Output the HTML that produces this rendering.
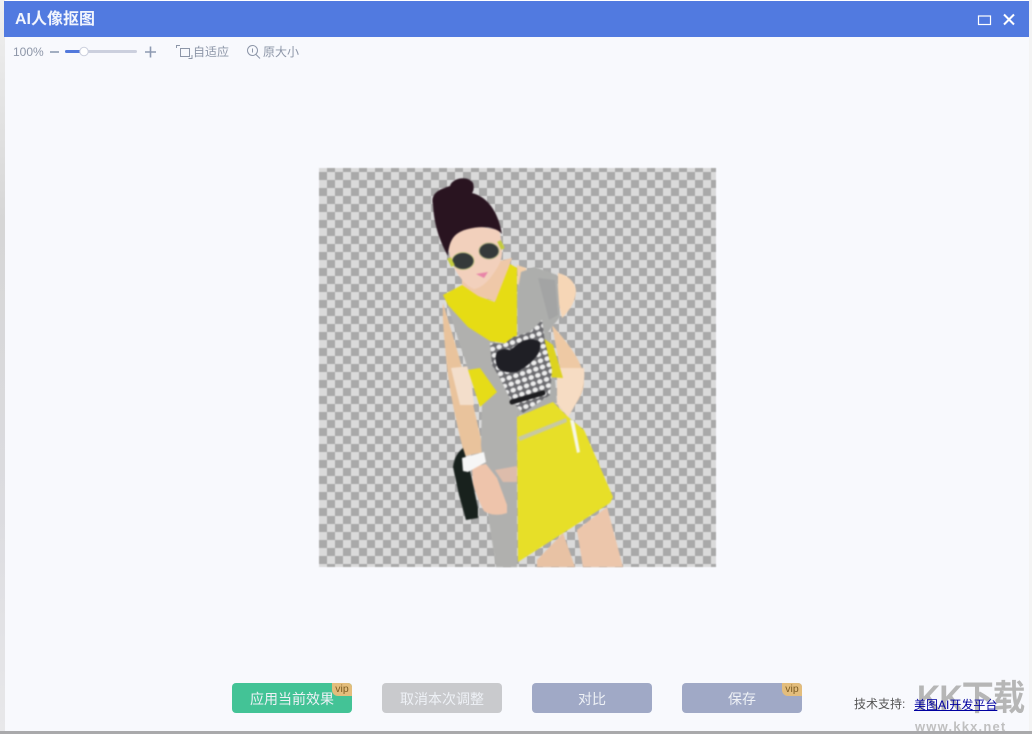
<!DOCTYPE html>
<html lang="zh"><head><meta charset="utf-8"><title>AI人像抠图</title>
<style>
html,body{margin:0;padding:0;width:1032px;height:734px;overflow:hidden;background:#fff}
*{box-sizing:border-box}
body{font-family:"Liberation Sans","Noto Sans CJK SC",sans-serif;position:relative}
.abs{position:absolute}
#edgeL{left:0;top:0;width:5px;height:734px;background:linear-gradient(#f0f0f0,#d6d6d6 30%,#dcdce0 70%,#e8e8ea)}
#edgeB{left:0;top:731px;width:1032px;height:3px;background:#a9a9ab}
#edgeR{left:1029px;top:0;width:3px;height:734px;background:#f4f4f4}
#win{left:5px;top:1px;width:1024px;height:730px;background:#f8f9fd}
#title{left:4px;top:1px;width:1025px;height:36px;background:#517ae0}
#ttext{left:15px;top:10px;font-size:16px;font-weight:bold;color:#f2f5fd;line-height:20px}
.tb{color:#8d96a8;font-size:12px;line-height:16px;white-space:nowrap}
#check{left:319px;top:168px;width:397px;height:399px;background:repeating-conic-gradient(#a9a9a9 0 25%,#dadada 0 50%) 0 -4px/16px 16px;filter:blur(.4px)}
.btn{position:absolute;top:683px;width:120px;height:30px;border-radius:4px;color:#eef1f6;font-size:14px;line-height:32px;text-align:center}
.vip{position:absolute;right:0;top:0;width:20px;height:13px;background:#e3bd7c;border-radius:0 4px 0 6px;color:#7c5c24;font-size:10.5px;line-height:12px;text-align:center}
</style></head><body>
<div class="abs" id="edgeL"></div><div class="abs" id="edgeR"></div>
<div class="abs" id="win"></div><div class="abs" id="edgeB"></div>
<div class="abs" id="title"></div>
<div class="abs" id="ttext">AI人像抠图</div>
<svg class="abs" style="left:970px;top:8px" width="50" height="24" fill="none" stroke="#fff">
<rect x="8.500" y="8" width="12" height="8.500" stroke-width="1.200"/>
<path d="M34 6.500L44 16.500M44 6.500L34 16.500" stroke-width="2"/>
</svg>
<div class="abs tb" style="left:13px;top:44px">100%</div>
<svg class="abs" style="left:45px;top:40px" width="270" height="24" fill="none">
<path d="M5 12H14" stroke="#8d9ab2" stroke-width="1.600"/>
<rect x="20" y="10" width="72" height="3" rx="1.500" fill="#ccd0de"/>
<rect x="20" y="10" width="19" height="3" rx="1.500" fill="#5279dc"/>
<circle cx="39" cy="11.500" r="4.200" fill="#fff" stroke="#ccd0de"/>
<path d="M100 12H111M105.500 6.500V17.500" stroke="#8d9ab2" stroke-width="1.600"/>
<g stroke="#8d96a8" stroke-width="1">
<rect x="135.500" y="8.500" width="9" height="8"/>
<path d="M131.500 8V5.500H135M147 15V18.500H143.500"/>
<circle cx="207.500" cy="10.500" r="5"/><path d="M211 14.500L215 18.500M207.500 8.500V12.500"/>
</g></svg>
<div class="abs tb" style="left:193px;top:44px">自适应</div>
<div class="abs tb" style="left:263px;top:44px">原大小</div>
<div class="abs" id="check"></div>
<svg class="abs" style="left:0;top:0;filter:blur(.8px)" width="1032" height="734">
<defs>
<pattern id="peb" width="7" height="6.500" patternUnits="userSpaceOnUse" patternTransform="rotate(-18)">
<rect width="7" height="6.500" fill="#6a6a6e"/>
<ellipse cx="3.500" cy="3.200" rx="2.800" ry="2.400" fill="#eeeeee"/>
</pattern>
</defs>
<!-- left arm -->
<path d="M443 303C448 320 456 345 462 368L472 400L484 452L465 456C458 430 450 395 447 367C445 345 442 320 443 303Z" fill="#e9c39c"/>
<path d="M451 368L470 366L474 405L460 405Z" fill="#f3decb"/>
<!-- right arm -->
<path d="M552 325C565 340 578 355 583 372C586 385 582 395 575 405L568 417L556 403C560 390 563 380 560 368Z" fill="#eec9a4"/>
<path d="M557 368L584 368C586 385 580 398 568 417L557 403Z" fill="#f6dcc3"/>
<!-- shoulder -->
<path d="M558 273C568 275 576 283 576 292C575 303 568 312 562 318L558 300Z" fill="#f6d6b6"/>
<path d="M517 265L526 268L528 276L518 285Z" fill="#f3cfa9"/>
<!-- neck/chest -->
<path d="M462 270L512 258L497 302L478 296L462 286Z" fill="#efc8a8"/>
<!-- gray dress lower-left -->
<path d="M447 304L470 328L492 342L517 345L517 567L496 567L488 515L481 445L482 405L470 375L460 345Z" fill="#b0b0ae"/>
<!-- gray upper right -->
<path d="M517 295L521 272L535 267L557 275L560 317L548 332L540 322L518 345Z" fill="#adaeac"/>
<path d="M538 278L555 280L558 315L549 320Z" fill="#a3a4a4"/>
<path d="M518 345L545 320L552 345L557 403L530 412L517 416Z" fill="#adaeac"/>
<!-- yellow top -->
<path d="M443 295L462 285L478 296L495 302L510 264L517 268L517 345L490 341L468 327L448 305Z" fill="#e6dc14"/>
<path d="M468 370L480 368L497 392L480 407Z" fill="#e6dc18"/>
<path d="M543 338L553 345L563 378L547 377Z" fill="#ddd31e"/>
<!-- owl -->
<path d="M490 343L504 344L513 337L530 332L542 320L545 342L552 370L550 395L523 413L517 407L508 395L500 378L492 365Z" fill="url(#peb)"/>
<path d="M497 352C502 348 507 349 510 350L517 345C522 340 532 337 540 342C541 350 538 355 535 358C528 366 522 369 517 372C508 373 502 372 498 368C495 362 495 356 497 352Z" fill="#1f1f25"/>
<path d="M512 402L543 393" stroke="#1d1d20" stroke-width="5" stroke-linecap="round"/>
<!-- yellow skirt -->
<path d="M517 417L553 402L567 416L584 430L613 497L610 503L518 562Z" fill="#e7df28"/>
<path d="M518 437L566 418L567 422L520 441Z" fill="#c8c9a0"/>
<path d="M570 420L574 420L580 452L577 453Z" fill="#f6f6e6"/>
<!-- legs -->
<path d="M537 560L563 533L575 567L537 567Z" fill="#e8c2a4"/>
<path d="M577 530L607 507L623 567L583 567Z" fill="#ecc6ab"/>
<!-- bag -->
<path d="M453 467C454 458 458 452 463 448L470 470L478 508L478 518L466 520L459 495Z" fill="#18211d"/>
<!-- hand -->
<path d="M472 467L486 464L497 478L507 505L507 513C498 516 490 515 484 511C478 500 475 490 473 484Z" fill="#eec4ab"/>
<path d="M495 470L517 466L517 482L503 482Z" fill="#ddbcab"/>
<!-- watch -->
<path d="M462 458L484 452L486 462L468 472L463 471Z" fill="#f6f6f6"/>
<!-- face -->
<path d="M447 234L470 225L499 230C503 245 504 258 497 268C490 280 482 288 474 289C464 285 455 272 450 258Z" fill="#f2d0bc"/>
<!-- hair -->
<path d="M433 205C430 193 440 189 450 186C452 178 468 175 473 183C475 190 472 193 472 193C488 197 498 212 502 234C495 226 480 226 468 229C456 232 449 238 448 256C438 238 434 222 433 205Z" fill="#291420"/>
<ellipse cx="463" cy="261" rx="11" ry="8.500" fill="#353a3a" stroke="#c8c888"/>
<ellipse cx="489" cy="251" rx="10" ry="8" fill="#353a3a" stroke="#b8b888"/>
<path d="M449 258L453 266M499 241L503 249" stroke="#c4cc3c" stroke-width="4"/>
<path d="M476 274L488 272L484 278Z" fill="#e884a8"/>
</svg>
<div class="btn" style="left:232px;background:#43c396">应用当前效果<span class="vip">vip</span></div>
<div class="btn" style="left:382px;background:#c9cacd">取消本次调整</div>
<div class="btn" style="left:532px;background:#a0a9c6">对比</div>
<div class="btn" style="left:682px;background:#a0a9c6">保存<span class="vip">vip</span></div>
<div class="abs" style="left:917px;top:677px;font-size:35px;font-weight:bold;color:#b6b6b6;line-height:44px;white-space:nowrap;letter-spacing:-1px;transform-origin:0 50%;transform:scaleX(.92)">KK下载</div>
<div class="abs" style="left:915px;top:720px;font-size:13px;font-weight:bold;color:#c0c0c0;line-height:14px;letter-spacing:1.200px;white-space:nowrap">www.kkx.net</div>
<div class="abs" style="left:854px;top:696px;font-size:12px;line-height:16px;color:#555;white-space:nowrap">技术支持:</div>
<a class="abs" style="left:914px;top:697px;font-size:12px;line-height:16px;color:#0000a0;text-decoration:underline;white-space:nowrap">美图AI开发平台</a>
</body></html>
